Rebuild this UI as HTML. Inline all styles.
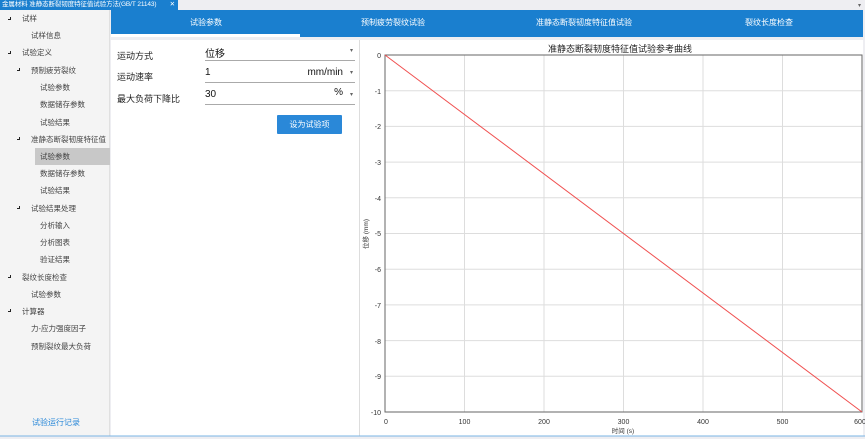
<!DOCTYPE html><html><head><meta charset="utf-8"><style>
*{margin:0;padding:0;box-sizing:border-box}
body{width:865px;height:439px;overflow:hidden;background:#eeeef2;font-family:"Liberation Sans","Noto Sans CJK SC",sans-serif;position:relative}
.tabt{position:absolute;left:0;top:0;width:178px;height:10px;background:#1a7fcf;color:#fff;font-size:6.5px;line-height:10px;padding-left:2px;white-space:nowrap;overflow:hidden;letter-spacing:-0.1px}
.side{position:absolute;left:0;top:10px;width:110px;height:426px;background:#f4f4f4;border-right:1px solid #e0e0e0}
.it{position:absolute;font-size:7.5px;color:#444;white-space:nowrap;line-height:10px}
.ar{position:absolute;width:3px;height:3px;border-right:1px solid #222;border-bottom:1px solid #222}
.hl{position:absolute;left:35px;top:148px;width:75px;height:17px;background:#c8c8c8}
.hdr{position:absolute;left:111px;top:10px;width:752px;height:27px;background:#1a7fcf}
.tab{position:absolute;top:0;height:27px;line-height:25px;color:#fff;font-size:8px}
.main{position:absolute;left:111px;top:40px;width:752px;height:396px;background:#fff}
.lbl{position:absolute;font-size:9px;color:#222}
.fld{position:absolute;left:205px;width:150px;border-bottom:1px solid #aaa;font-size:10px;color:#111;height:16px}
.btn{position:absolute;left:277px;top:115px;width:65px;height:19px;background:#2a88d8;color:#fff;font-size:8px;text-align:center;line-height:19px;border-radius:1px}
</style></head><body>
<div class="tabt">金属材料 准静态断裂韧度特征值试验方法(GB/T 21143)<span style="position:absolute;right:3px;top:0">✕</span></div>
<div class="side"></div>
<div class="hl"></div>
<div class="ar" style="left:8px;top:17px"></div><div class="it" style="left:22px;top:14px">试样</div>
<div class="it" style="left:31px;top:31px">试样信息</div>
<div class="ar" style="left:8px;top:51px"></div><div class="it" style="left:22px;top:48px">试验定义</div>
<div class="ar" style="left:17px;top:68px"></div><div class="it" style="left:31px;top:66px">预制疲劳裂纹</div>
<div class="it" style="left:40px;top:83px">试验参数</div>
<div class="it" style="left:40px;top:100px">数据储存参数</div>
<div class="it" style="left:40px;top:118px">试验结果</div>
<div class="ar" style="left:17px;top:137px"></div><div class="it" style="left:31px;top:135px">准静态断裂韧度特征值</div>
<div class="it" style="left:40px;top:152px">试验参数</div>
<div class="it" style="left:40px;top:169px">数据储存参数</div>
<div class="it" style="left:40px;top:186px">试验结果</div>
<div class="ar" style="left:17px;top:206px"></div><div class="it" style="left:31px;top:204px">试验结果处理</div>
<div class="it" style="left:40px;top:221px">分析输入</div>
<div class="it" style="left:40px;top:238px">分析图表</div>
<div class="it" style="left:40px;top:255px">验证结果</div>
<div class="ar" style="left:8px;top:275px"></div><div class="it" style="left:22px;top:273px">裂纹长度检查</div>
<div class="it" style="left:31px;top:290px">试验参数</div>
<div class="ar" style="left:8px;top:309px"></div><div class="it" style="left:22px;top:307px">计算器</div>
<div class="it" style="left:31px;top:324px">力-应力强度因子</div>
<div class="it" style="left:31px;top:342px">预制裂纹最大负荷</div>
<div class="it" style="left:32px;top:418px;color:#2a88d8;font-size:8px">试验运行记录</div>
<div class="hdr">
<div class="tab" style="left:79px">试验参数</div>
<div style="position:absolute;left:0;top:24px;width:189px;height:3px;background:#fff"></div>
<div class="tab" style="left:250px">预制疲劳裂纹试验</div>
<div class="tab" style="left:425px">准静态断裂韧度特征值试验</div>
<div class="tab" style="left:634px">裂纹长度检查</div>
</div>
<div style="position:absolute;left:858px;top:2px;font-size:6px;color:#666">▾</div>
<div class="main"></div>
<div style="position:absolute;left:359px;top:40px;width:1px;height:396px;background:#ddd"></div>
<div class="lbl" style="left:117px;top:49px">运动方式</div>
<div class="lbl" style="left:117px;top:70px">运动速率</div>
<div class="lbl" style="left:117px;top:92px">最大负荷下降比</div>
<div class="fld" style="top:45px">位移<span style="position:absolute;right:2px;top:2px;font-size:6px;color:#666">▾</span></div>
<div class="fld" style="top:67px">1<span style="position:absolute;right:12px;top:0">mm/min</span><span style="position:absolute;right:2px;top:2px;font-size:6px;color:#666">▾</span></div>
<div class="fld" style="top:89px">30<span style="position:absolute;right:12px;top:-2px">%</span><span style="position:absolute;right:2px;top:2px;font-size:6px;color:#666">▾</span></div>
<div class="btn">设为试验项</div>
<svg style="position:absolute;left:0;top:0" width="865" height="439" font-family="Liberation Sans, Noto Sans CJK SC, sans-serif">
<text x="620" y="52" font-size="9" text-anchor="middle" fill="#222">准静态断裂韧度特征值试验参考曲线</text>
<g stroke="#ddd" stroke-width="1">
<line x1="464.5" y1="55" x2="464.5" y2="412"/><line x1="544" y1="55" x2="544" y2="412"/><line x1="623.5" y1="55" x2="623.5" y2="412"/><line x1="703" y1="55" x2="703" y2="412"/><line x1="782.5" y1="55" x2="782.5" y2="412"/>
<line x1="385" y1="90.7" x2="862" y2="90.7"/><line x1="385" y1="126.4" x2="862" y2="126.4"/><line x1="385" y1="162.1" x2="862" y2="162.1"/><line x1="385" y1="197.8" x2="862" y2="197.8"/><line x1="385" y1="233.5" x2="862" y2="233.5"/><line x1="385" y1="269.2" x2="862" y2="269.2"/><line x1="385" y1="304.9" x2="862" y2="304.9"/><line x1="385" y1="340.6" x2="862" y2="340.6"/><line x1="385" y1="376.3" x2="862" y2="376.3"/>
</g>
<rect x="385" y="55" width="477" height="357" fill="none" stroke="#666" stroke-width="1"/>
<line x1="385" y1="55" x2="862" y2="412" stroke="#f05050" stroke-width="1"/>
<g font-size="7" fill="#333" text-anchor="end">
<text x="381" y="58">0</text><text x="381" y="94">-1</text><text x="381" y="129">-2</text><text x="381" y="165">-3</text><text x="381" y="201">-4</text><text x="381" y="236">-5</text><text x="381" y="272">-6</text><text x="381" y="308">-7</text><text x="381" y="344">-8</text><text x="381" y="379">-9</text><text x="381" y="415">-10</text>
</g>
<g font-size="7" fill="#333" text-anchor="middle">
<text x="386" y="424">0</text><text x="464.5" y="424">100</text><text x="544" y="424">200</text><text x="623.5" y="424">300</text><text x="703" y="424">400</text><text x="782.5" y="424">500</text><text x="860" y="424">600</text>
<text x="623" y="433" font-size="6.5">时间 (s)</text>
</g>
<text x="368" y="234" font-size="6.5" fill="#333" text-anchor="middle" transform="rotate(-90 368 234)">位移 (mm)</text>
<line x1="0" y1="436" x2="865" y2="436" stroke="#7ab4e4" stroke-width="1"/>
</svg>
</body></html>
